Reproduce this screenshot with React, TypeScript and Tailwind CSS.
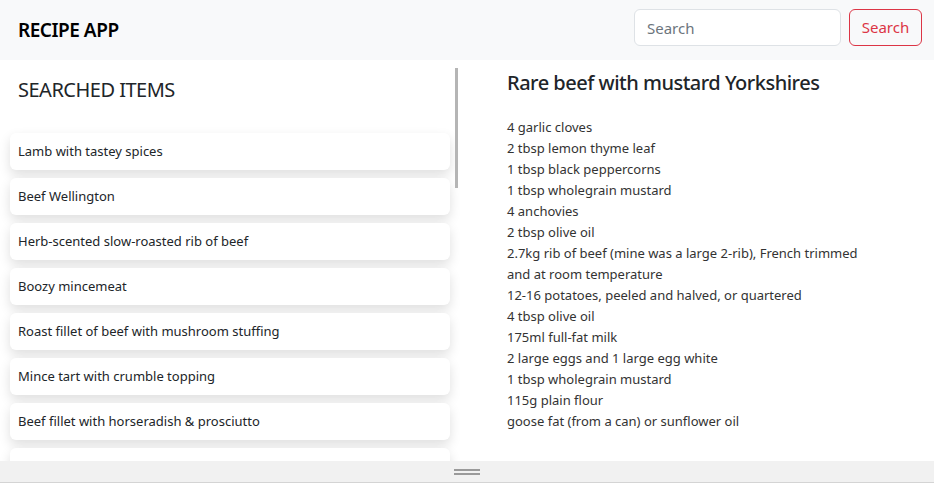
import React from 'react';

const items = [
  'Lamb with tastey spices',
  'Beef Wellington',
  'Herb-scented slow-roasted rib of beef',
  'Boozy mincemeat',
  'Roast fillet of beef with mushroom stuffing',
  'Mince tart with crumble topping',
  'Beef fillet with horseradish & prosciutto',
  'Beef & Guinness pie',
];

const ingredients = [
  '4 garlic cloves',
  '2 tbsp lemon thyme leaf',
  '1 tbsp black peppercorns',
  '1 tbsp wholegrain mustard',
  '4 anchovies',
  '2 tbsp olive oil',
  '2.7kg rib of beef (mine was a large 2-rib), French trimmed and at room temperature',
  '12-16 potatoes, peeled and halved, or quartered',
  '4 tbsp olive oil',
  '175ml full-fat milk',
  '2 large eggs and 1 large egg white',
  '1 tbsp wholegrain mustard',
  '115g plain flour',
  'goose fat (from a can) or sunflower oil',
];

export default function App() {
  return (
    <div className="w-[934px] h-[483px] flex flex-col bg-white text-[#212529] font-['Noto_Sans',sans-serif] overflow-hidden">
      {/* Navbar */}
      <header className="h-[60px] shrink-0 bg-[#f8f9fa] flex items-center justify-between pl-[18px] pr-[12px]">
        <h1 className="text-[19px] font-semibold text-black tracking-tight">RECIPE APP</h1>
        <div className="self-start mt-[9px] flex items-center gap-2">
          <input
            placeholder="Search"
            className="w-[207px] h-[37px] rounded-md border border-[#dee2e6] bg-white px-3 text-[15px] placeholder:text-[#6c757d] outline-none"
          />
          <button className="h-[37px] w-[73px] rounded-md border border-[#dc3545] text-[#dc3545] text-[15px]">
            Search
          </button>
        </div>
      </header>

      {/* Content */}
      <div className="flex-1 flex min-h-0">
        <aside className="w-[460px] shrink-0 relative overflow-hidden">
          <h2 className="mt-[15px] pl-[18px] text-[20px] leading-[30px] tracking-tight">SEARCHED ITEMS</h2>
          <ul className="mt-[28px] pl-[10px] pr-[10px] flex flex-col gap-2">
            {items.map((item) => (
              <li
                key={item}
                className="h-[37px] flex items-center px-2 rounded-md bg-white text-[13px] shadow-[0_5px_12px_rgba(0,0,0,0.13)]"
              >
                {item}
              </li>
            ))}
          </ul>
          {/* scrollbar thumb */}
          <div className="absolute left-[455px] top-[8px] w-[3px] h-[120px] bg-[#b5b5b5]" />
        </aside>

        <main className="flex-1 pl-[47px] pt-[8px]">
          <h2 className="text-[20px] leading-[30px] font-medium tracking-tight">Rare beef with mustard Yorkshires</h2>
          <div className="mt-[19px] w-[370px] text-[13px] leading-[21px] text-[#333]">
            {ingredients.map((ing, i) => (
              <div key={i}>{ing}</div>
            ))}
          </div>
        </main>
      </div>

      {/* Resize bar */}
      <div className="relative z-10 h-[22px] shrink-0 bg-[#f1f1f1] border-b border-[#d4d4d4] flex items-center justify-center">
        <div className="flex flex-col gap-[2px] w-[26px]">
          <div className="h-[2px] bg-[#9a9a9a]" />
          <div className="h-[2px] bg-[#9a9a9a]" />
        </div>
      </div>
    </div>
  );
}
